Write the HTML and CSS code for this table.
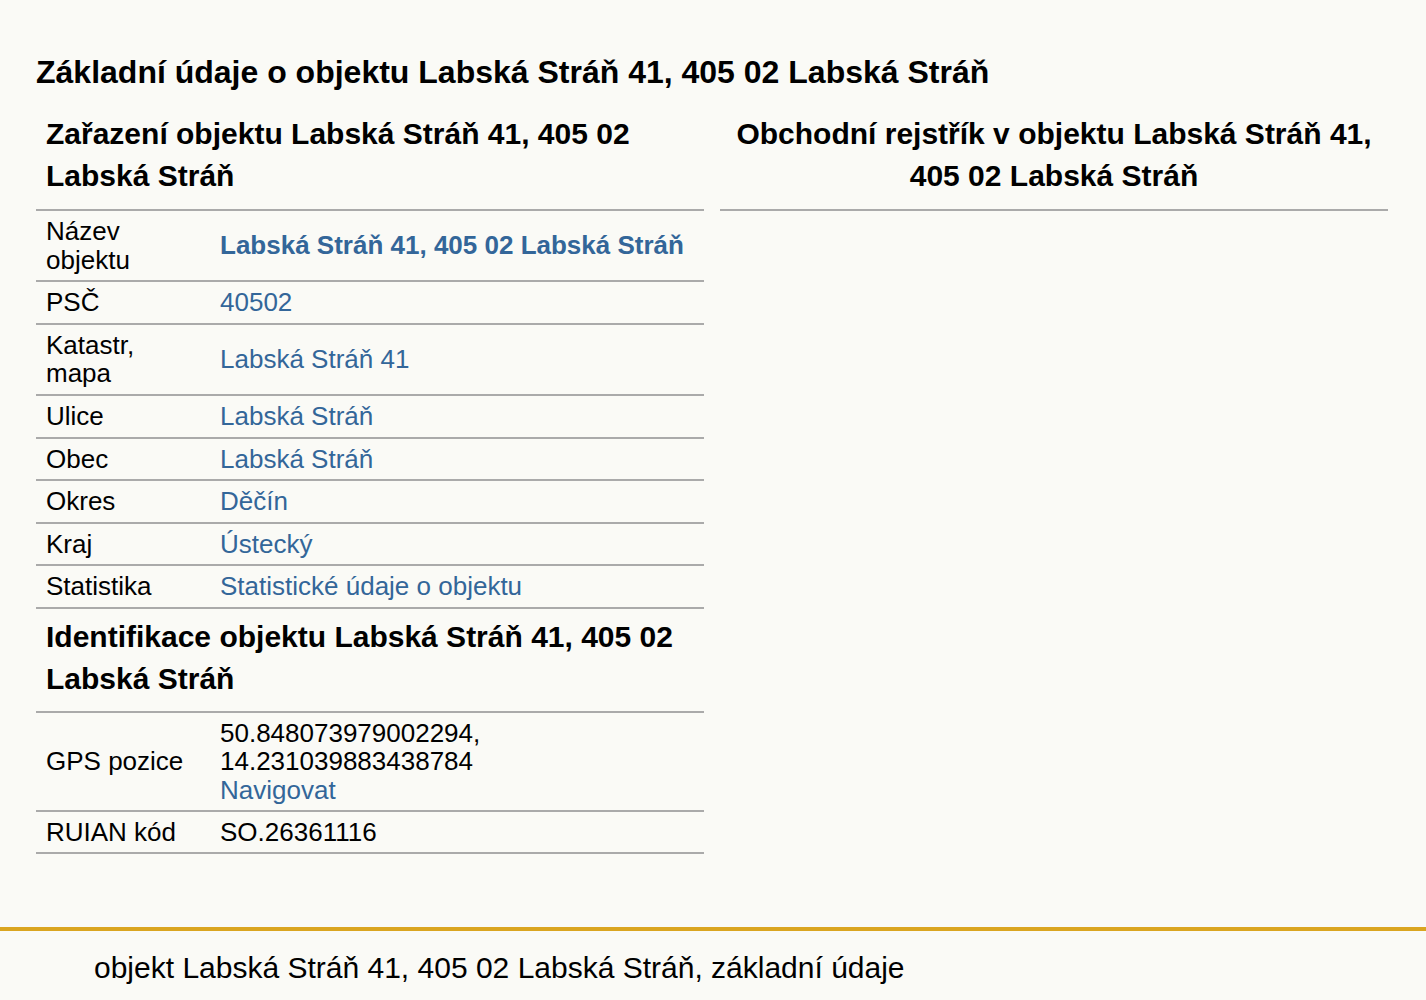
FILE: index.html
```html
<!DOCTYPE html>
<html lang="cs">
<head>
<meta charset="utf-8">
<title>Labská Stráň 41</title>
<link rel="stylesheet" href="styles.css">
</head>
<body>
<main class="page">
  <h1 class="title">Základní údaje o objektu Labská Stráň 41, 405 02 Labská Stráň</h1>
  <div class="columns">
    <div class="col">
      <table class="info">
        <tr><th colspan="2" class="head">Zařazení objektu Labská Stráň 41, 405 02 Labská Stráň</th></tr>
        <tr><td class="lbl">Název objektu</td><td class="val"><a class="strong" href="#">Labská Stráň 41, 405 02 Labská Stráň</a></td></tr>
        <tr><td class="lbl">PSČ</td><td class="val"><a href="#">40502</a></td></tr>
        <tr><td class="lbl">Katastr, mapa</td><td class="val"><a href="#">Labská Stráň 41</a></td></tr>
        <tr><td class="lbl">Ulice</td><td class="val"><a href="#">Labská Stráň</a></td></tr>
        <tr><td class="lbl">Obec</td><td class="val"><a href="#">Labská Stráň</a></td></tr>
        <tr><td class="lbl">Okres</td><td class="val"><a href="#">Děčín</a></td></tr>
        <tr><td class="lbl">Kraj</td><td class="val"><a href="#">Ústecký</a></td></tr>
        <tr><td class="lbl">Statistika</td><td class="val"><a href="#">Statistické údaje o objektu</a></td></tr>
        <tr><th colspan="2" class="head sub">Identifikace objektu Labská Stráň 41, 405 02 Labská Stráň</th></tr>
        <tr><td class="lbl">GPS pozice</td><td class="val gps">50.848073979002294, 14.231039883438784<br><a href="#">Navigovat</a></td></tr>
        <tr><td class="lbl">RUIAN kód</td><td class="val">SO.26361116</td></tr>
      </table>
    </div>
    <div class="col">
      <table class="info">
        <tr><th class="head center">Obchodní rejstřík v objektu Labská Stráň 41, 405 02 Labská Stráň</th></tr>
      </table>
    </div>
  </div>
</main>
<footer class="footer">
  <p class="footer-text">objekt Labská Stráň 41, 405 02 Labská Stráň, základní údaje</p>
</footer>
</body>
</html>
```
FILE: styles.css
```css
html, body {
  margin: 0;
  padding: 0;
  background: #fafaf6;
  color: #000;
  font-family: "Liberation Sans", Arial, sans-serif;
}
.page {
  padding: 0 38px 0 36px;
  min-height: 927px;
  box-sizing: border-box;
}
.title {
  margin: 0;
  padding-top: 50px;
  font-size: 32px;
  line-height: 45px;
  font-weight: bold;
}
.columns {
  display: grid;
  grid-template-columns: 1fr 1fr;
  gap: 16px;
  margin-top: 11px;
}
.info {
  width: 100%;
  border-collapse: collapse;
  font-size: 26px;
  line-height: 28.6px;
}
.info th.head {
  text-align: left;
  font-size: 30px;
  line-height: 42px;
  font-weight: bold;
  padding: 7px 10px 12px;
  border-bottom: 2px solid #aaa;
}
.info th.head.sub {
  padding-bottom: 11px;
}
.info th.head.center {
  text-align: center;
}
.info td {
  padding: 6px 10px;
  border-bottom: 2px solid #aaa;
  vertical-align: middle;
}
.info td.gps {
  line-height: 28.3px;
  padding: 6px 10px;
}
.info td.lbl {
  width: 154px;
}
.info a {
  color: #336699;
  text-decoration: none;
}
.info a.strong {
  font-weight: bold;
}
.footer {
  border-top: 4px solid #daa520;
}
.footer-text {
  margin: 0;
  padding: 16px 0 0 94px;
  font-size: 30px;
  line-height: 42px;
}
```
